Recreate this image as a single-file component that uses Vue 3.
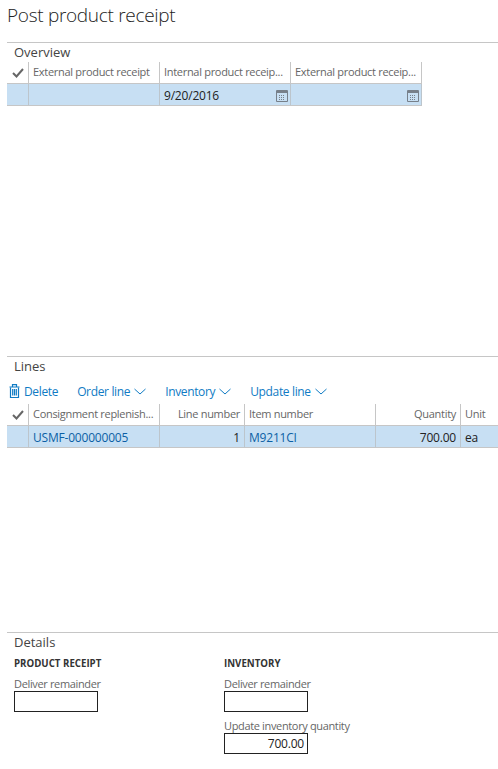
<script setup>
const overviewCols = ['External product receipt', 'Internal product receip...', 'External product receip...']
const menus = ['Order line', 'Inventory', 'Update line']
</script>

<template>
  <div class="page">
    <h1 class="title">Post product receipt</h1>

    <section class="overview">
      <h2 class="section-title">Overview</h2>
      <div class="grid overview-grid">
        <div class="head check-head">
          <svg width="12" height="10" viewBox="0 0 12 10"><path d="M1 5 L4.5 8.5 L11 1" fill="none" stroke="#666" stroke-width="2" /></svg>
        </div>
        <div v-for="col in overviewCols" :key="col" class="head">{{ col }}</div>
        <div class="cell"></div>
        <div class="cell"></div>
        <div class="cell date">
          <span>9/20/2016</span>
          <svg width="12" height="13" viewBox="0 0 12 13"><path d="M.5 1.5h11v11H.5z" fill="none" stroke="#77808a" /><path d="M1 2h10v2H1z" fill="#77808a" /><path d="M3 6.5h6M3 8.5h6M3 10.5h6" stroke="#77808a" stroke-dasharray="1 1" /></svg>
        </div>
        <div class="cell date">
          <span></span>
          <svg width="12" height="13" viewBox="0 0 12 13"><path d="M.5 1.5h11v11H.5z" fill="none" stroke="#77808a" /><path d="M1 2h10v2H1z" fill="#77808a" /><path d="M3 6.5h6M3 8.5h6M3 10.5h6" stroke="#77808a" stroke-dasharray="1 1" /></svg>
        </div>
      </div>
    </section>

    <section class="lines">
      <h2 class="section-title">Lines</h2>
      <div class="toolbar">
        <span class="action delete">
          <svg width="11" height="14" viewBox="0 0 11 14"><path d="M1.5 3.5v10h8v-10" fill="none" stroke="#0f7bc4" stroke-width="1.2" /><path d="M.5 3h10M3.5 3V.7h4V3M3.7 5v6.5M5.5 5v6.5M7.3 5v6.5" fill="none" stroke="#0f7bc4" stroke-width="1.2" /></svg>
          Delete
        </span>
        <span v-for="m in menus" :key="m" class="action">
          {{ m }}
          <svg width="12" height="7" viewBox="0 0 12 7"><path d="M.5 1L6 6l5.5-5" fill="none" stroke="#0f7bc4" /></svg>
        </span>
      </div>
      <div class="grid lines-grid">
        <div class="head check-head">
          <svg width="12" height="10" viewBox="0 0 12 10"><path d="M1 5 L4.5 8.5 L11 1" fill="none" stroke="#666" stroke-width="2" /></svg>
        </div>
        <div class="head">Consignment replenish...</div>
        <div class="head right">Line number</div>
        <div class="head">Item number</div>
        <div class="head right">Quantity</div>
        <div class="head">Unit</div>
        <div class="cell"></div>
        <div class="cell link">USMF-000000005</div>
        <div class="cell right">1</div>
        <div class="cell link">M9211CI</div>
        <div class="cell right">700.00</div>
        <div class="cell">ea</div>
      </div>
    </section>

    <section class="details">
      <h2 class="section-title">Details</h2>
      <div class="groups">
        <div class="group">
          <h3>PRODUCT RECEIPT</h3>
          <div class="field">
            <label>Deliver remainder</label>
            <div class="input"></div>
          </div>
        </div>
        <div class="group">
          <h3>INVENTORY</h3>
          <div class="field">
            <label>Deliver remainder</label>
            <div class="input"></div>
          </div>
          <div class="field">
            <label>Update inventory quantity</label>
            <div class="input num">700.00</div>
          </div>
        </div>
      </div>
    </section>
  </div>
</template>

<style scoped>
.page {
  width: 498px;
  height: 769px;
  overflow: hidden;
  background: #fff;
  font-family: "Open Sans", "Noto Sans", sans-serif;
  color: #333;
  font-size: 12px;
}

.title {
  margin: 0;
  padding: 2px 0 0 7px;
  height: 42px;
  box-sizing: border-box;
  font-size: 19px;
  line-height: 26px;
  font-weight: 300;
  letter-spacing: -0.3px;
  color: #222;
}

section {
  margin-left: 7px;
  border-top: 1px solid #c6c6c6;
}

.overview { height: 313px; }
.lines { height: 275px; }

.section-title {
  margin: 0;
  padding-left: 7px;
  height: 19px;
  font-size: 13px;
  line-height: 19px;
  font-weight: 400;
  color: #444;
}

.grid {
  display: grid;
  grid-template-rows: 22px 22px;
}

.overview-grid {
  width: 415px;
  grid-template-columns: 22px 131px 131px 131px;
}

.lines-grid {
  grid-template-columns: 22px 131px 85px 131px 85px 37px;
}

.head {
  display: flex;
  align-items: center;
  padding: 0 4px 2px 4px;
  box-sizing: border-box;
  font-size: 11px;
  letter-spacing: -0.3px;
  color: #666;
  white-space: nowrap;
  overflow: hidden;
  border-right: 1px solid #c6c6c6;
  border-bottom: 1px solid #c6c6c6;
}

.check-head {
  justify-content: center;
  padding: 0;
}

.cell {
  display: flex;
  align-items: center;
  padding: 1px 4px 0 4px;
  box-sizing: border-box;
  background: #c7dff3;
  color: #222;
  font-size: 12px;
  letter-spacing: -0.2px;
  white-space: nowrap;
  border-right: 1px solid #bcc5cc;
  border-bottom: 1px solid #c6c6c6;
}

.lines-grid .head:nth-child(6),
.lines-grid .cell:last-child { border-right: none; }

.right { justify-content: flex-end; }
.link { color: #0b5fa5; }

.date {
  justify-content: space-between;
  padding-right: 2px;
}

.toolbar {
  display: flex;
  align-items: center;
  height: 28px;
  padding: 2px 0 0 2px;
  box-sizing: border-box;
  gap: 19px;
}

.action {
  display: flex;
  align-items: center;
  gap: 4px;
  color: #0f7bc4;
  font-size: 12px;
  letter-spacing: -0.35px;
  white-space: nowrap;
}

.groups {
  display: flex;
  padding: 3px 0 0 7px;
}

.group { width: 210px; }

.group h3 {
  margin: 0;
  height: 21px;
  font-size: 9.7px;
  line-height: 18px;
  font-weight: 700;
  color: #333;
}

.field { margin-bottom: 6px; }

.field label {
  display: block;
  height: 15px;
  font-size: 11px;
  letter-spacing: -0.35px;
  line-height: 15px;
  color: #666;
  white-space: nowrap;
}

.input {
  width: 84px;
  height: 21px;
  box-sizing: border-box;
  border: 1px solid #222;
  font-size: 12px;
  letter-spacing: -0.2px;
  line-height: 19px;
  color: #222;
}

.num {
  text-align: right;
  padding-right: 3px;
}
</style>

<style>
body { margin: 0; background: #fff; }
</style>
